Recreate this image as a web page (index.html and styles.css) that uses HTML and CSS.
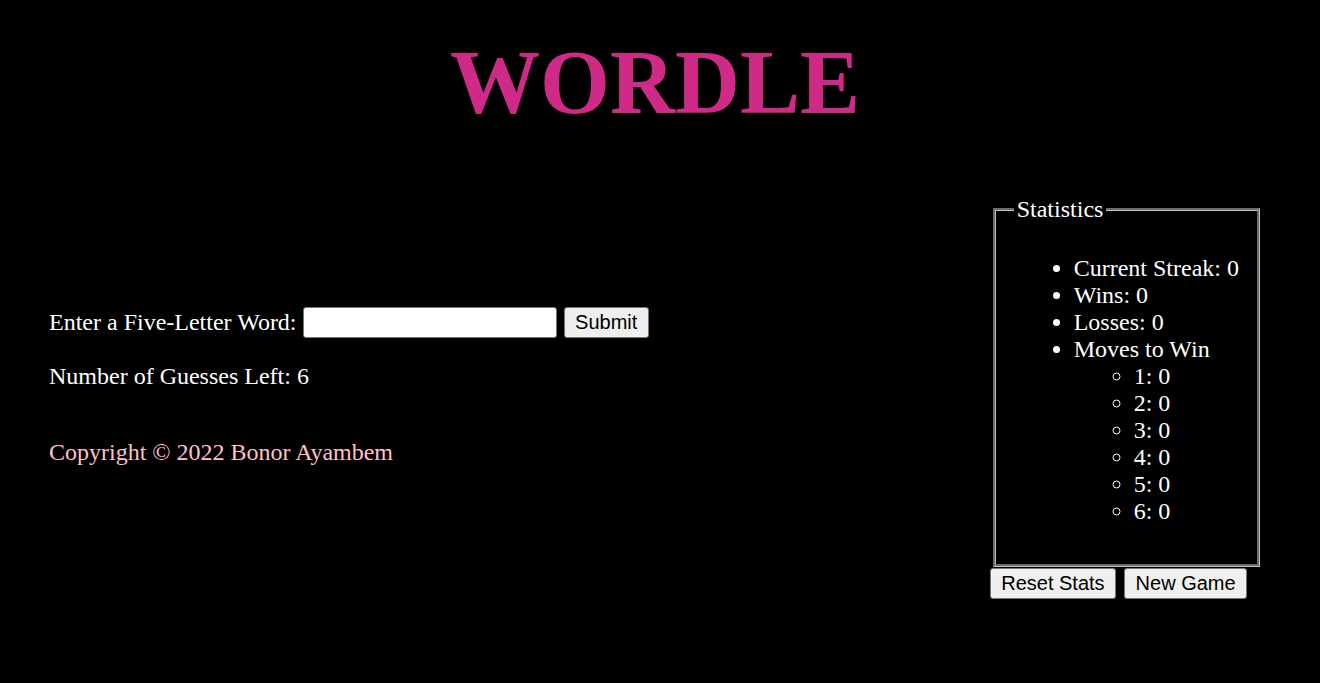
FILE: index.html
```html
<!DOCTYPE html>
<html lang="en">
<head>
<meta charset="utf-8">
<title>Wordle</title>
<link rel="stylesheet" href="styles.css">
</head>
<body>
<header class="header">
  <h1 class="title">WORDLE</h1>
</header>
<main class="main">
  <section class="game">
    <div class="guess-row">
      <label class="guess-label" for="guess">Enter a Five-Letter Word:</label>
      <input class="guess-input" id="guess" type="text">
      <button class="btn" type="button">Submit</button>
    </div>
    <p class="guesses-left">Number of Guesses Left: 6</p>
    <p class="copyright">Copyright © 2022 Bonor Ayambem</p>
  </section>
  <aside class="stats">
    <fieldset class="stats-box">
      <legend class="stats-legend">Statistics</legend>
      <ul class="stats-list">
        <li>Current Streak: 0</li>
        <li>Wins: 0</li>
        <li>Losses: 0</li>
        <li>Moves to Win
          <ul class="moves-list">
            <li>1: 0</li>
            <li>2: 0</li>
            <li>3: 0</li>
            <li>4: 0</li>
            <li>5: 0</li>
            <li>6: 0</li>
          </ul>
        </li>
      </ul>
    </fieldset>
    <div class="stats-actions">
      <button class="btn" type="button">Reset Stats</button>
      <button class="btn" type="button">New Game</button>
    </div>
  </aside>
</main>
</body>
</html>
```
FILE: styles.css
```css
html, body {
  margin: 0;
  padding: 0;
  background: #000;
}
body {
  color: #fff;
  font-family: "Liberation Serif", "Times New Roman", serif;
  font-size: 24px;
}
.header {
  padding-top: 31px;
  text-align: center;
}
.title {
  margin: 0 0 62px 0;
  font-size: 90px;
  font-weight: bold;
  color: #cf2a87;
  line-height: normal;
  padding-right: 10px;
}
.main {
  display: flex;
  justify-content: space-between;
  align-items: flex-start;
  padding: 0 57px 0 49px;
}
.game {
  padding-top: 111px;
}
.guess-row {
  display: flex;
  align-items: center;
  height: 31px;
}
.guess-label {
  margin-right: 6px;
}
.guess-input {
  box-sizing: border-box;
  width: 254px;
  height: 31px;
  border: 1px solid #767676;
  border-radius: 3px;
  background: #fff;
  margin: 0 7px 0 0;
  padding: 0 3px;
  font-size: 20px;
}
.btn {
  box-sizing: border-box;
  height: 31px;
  padding: 0 10.5px;
  border: 1px solid #767676;
  border-radius: 3px;
  background: #efefef;
  color: #000;
  font-family: "Liberation Sans", Arial, sans-serif;
  font-size: 20px;
  margin: 0;
}
.guesses-left {
  margin: 25px 0 0 0;
}
.copyright {
  margin: 49px 0 0 0;
  color: #ffc0cb;
}
.stats {
  display: flex;
  flex-direction: column;
}
.stats-box {
  margin: 0 3px;
  padding: 8px 18px 15px 18px;
  border: 3px groove #c0c0c0;
}
.stats-legend {
  padding: 0 3px;
}
.stats-list {
  margin: 24px 0;
  padding-left: 60px;
  list-style: disc;
}
.moves-list {
  margin: 0;
  padding-left: 60px;
  list-style: circle;
}
.stats-actions {
  display: flex;
  gap: 8px;
  margin-top: 1px;
}
```
